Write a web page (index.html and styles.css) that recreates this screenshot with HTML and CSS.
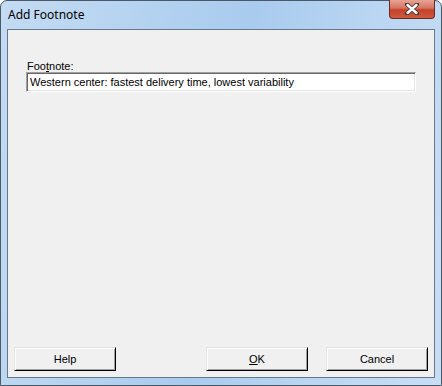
FILE: index.html
```html
<!DOCTYPE html>
<html lang="en">
<head>
  <meta charset="UTF-8">
  <title>Add Footnote</title>
  <link rel="stylesheet" href="styles.css">
</head>
<body>
  <!-- Dialog window frame -->
  <div class="window">
    <div class="titlebar">
      <span class="title">Add Footnote</span>
      <div class="close">
        <svg width="16" height="12" viewBox="0 0 16 12">
          <path d="M3 1.5 L13 10.5 M13 1.5 L3 10.5" stroke="#3a3a3a" stroke-width="4.2" stroke-linecap="round"/>
          <path d="M3.5 2 L12.5 10 M12.5 2 L3.5 10" stroke="#fff" stroke-width="2.4" stroke-linecap="round"/>
        </svg>
      </div>
    </div>

    <!-- Client area -->
    <div class="client">
      <div class="field">
        <label class="label" for="footnote">Foo<u>t</u>note:</label>
        <div class="textbox" id="footnote">Western center: fastest delivery time, lowest variability</div>
      </div>

      <div class="buttons">
        <button class="btn">Help</button>
        <div class="spacer"></div>
        <button class="btn"><u>O</u>K</button>
        <button class="btn">Cancel</button>
      </div>
    </div>
  </div>
</body>
</html>
```

FILE: styles.css
```css
/* Reset margins and fill the viewport */
html, body {
  margin: 0;
  padding: 0;
  width: 442px;
  height: 386px;
  overflow: hidden;
  background: #fff;
}
/* Outer window frame (Aero style) */
.window {
  box-sizing: border-box;
  width: 442px;
  height: 386px;
  display: flex;
  flex-direction: column;
  padding: 0 6px 7px;
  border: 1px solid #4a5868;
  border-radius: 7px 7px 0 0;
  background: linear-gradient(100deg, #c3dbf3 0%, #b4d2f0 30%, #a9cbee 50%, #bad6f2 75%, #c8def5 100%);
}
/* Title bar row */
.titlebar {
  height: 28px;
  display: flex;
  align-items: flex-start;
  justify-content: space-between;
}
.title {
  margin-top: 5px;
  margin-left: 1px;
  font-family: "Noto Sans", sans-serif;
  font-size: 12px;
  color: #000;
}
/* Red close button */
.close {
  width: 44px;
  height: 18px;
  margin-top: -1px;
  margin-right: 0;
  display: flex;
  align-items: center;
  justify-content: center;
  border: 1px solid #6b2a22;
  border-top: none;
  border-radius: 0 0 4px 4px;
  background: linear-gradient(#e8a394 0%, #d6735f 45%, #c2412a 55%, #cf5a3c 100%);
}
/* Dialog client area */
.client {
  flex: 1;
  display: flex;
  flex-direction: column;
  justify-content: space-between;
  border: 1px solid #67788b;
  background: #f0f0f0;
  font-family: "Liberation Sans", sans-serif;
  font-size: 11px;
  color: #000;
}
.field {
  padding: 30px 18px 0;
}
.label {
  display: block;
  padding-left: 1px;
  margin-bottom: 0;
}
/* Sunken single-line text box */
.textbox {
  height: 18px;
  line-height: 18px;
  padding-left: 3px;
  background: #fff;
  border: 1px solid;
  border-color: #a0a0a0 #fff #fff #a0a0a0;
  box-shadow: inset 1px 1px 0 #696969, inset -1px -1px 0 #e3e3e3;
}
/* Bottom button row */
.buttons {
  display: flex;
  gap: 18px;
  padding: 0 6px 6px;
}
.spacer {
  flex: 1;
}
.btn {
  width: 102px;
  height: 24px;
  padding: 0;
  font-family: "Liberation Sans", sans-serif;
  font-size: 11px;
  color: #000;
  background: #f0f0f0;
  border: 1px solid;
  border-color: #e3e3e3 #000 #000 #e3e3e3;
  box-shadow: inset 1px 1px 0 #fff, inset -1px -1px 0 #a0a0a0;
}
```
